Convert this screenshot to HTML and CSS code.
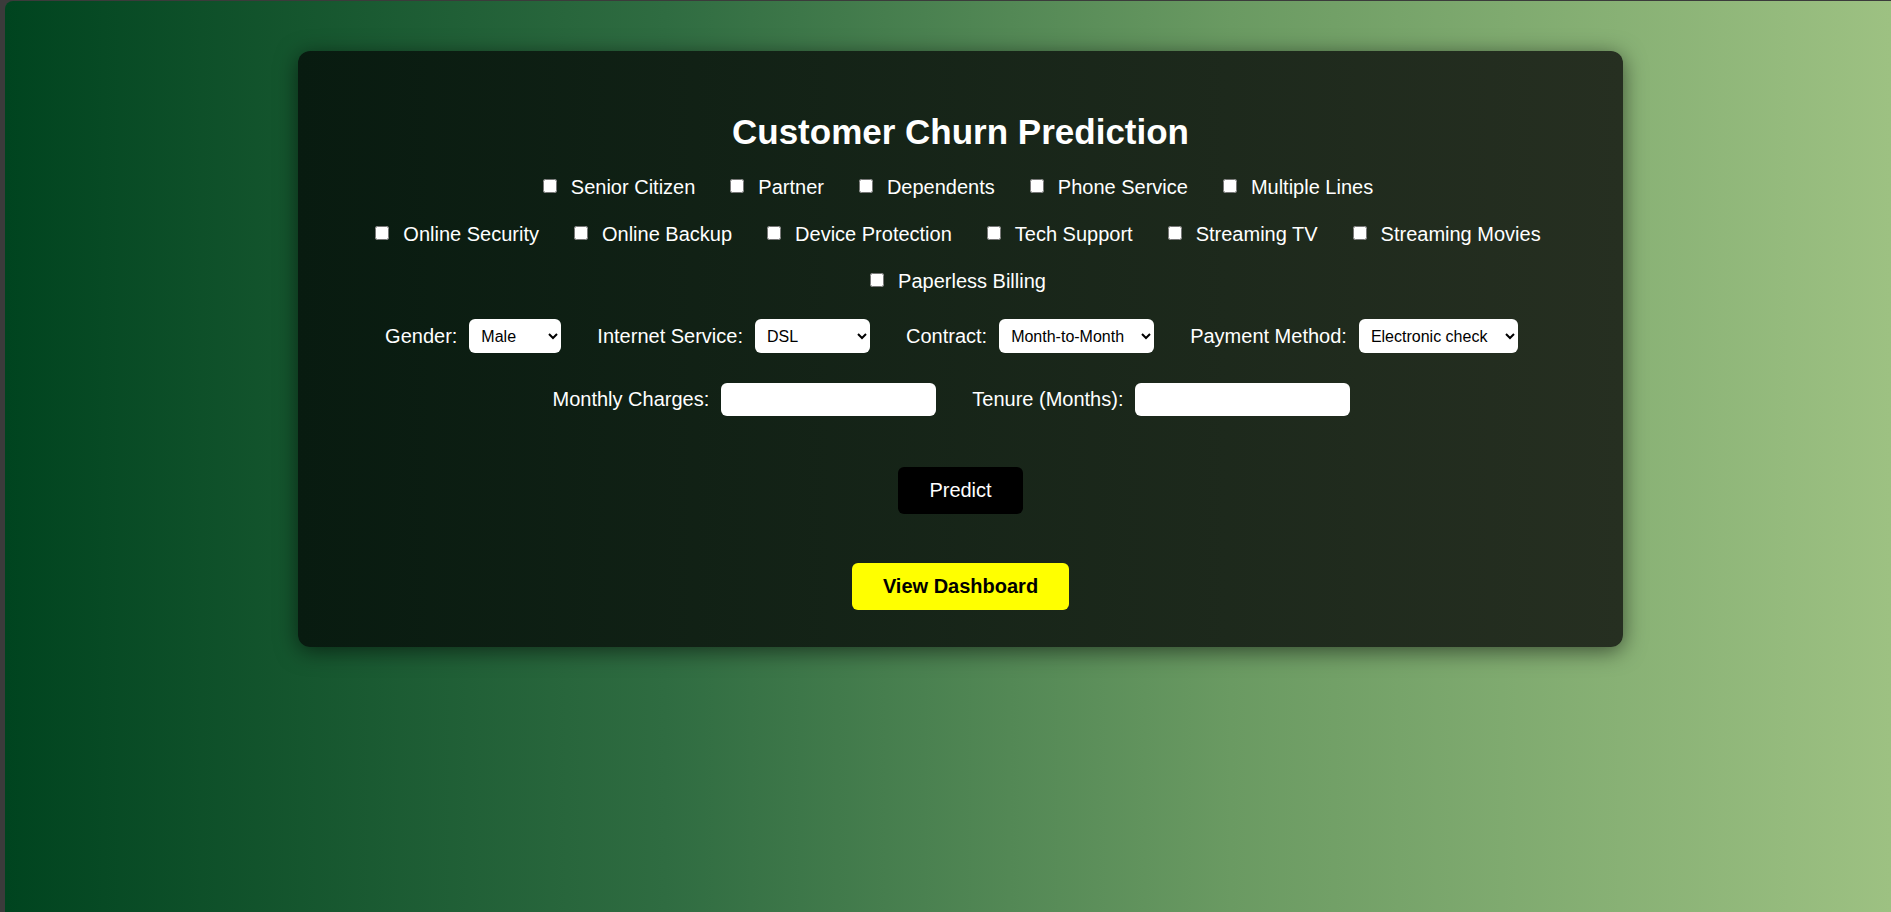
FILE: index.html
```html
<!DOCTYPE html>
<html lang="en">
<head>
<meta charset="utf-8">
<title>Customer Churn Prediction</title>
<link rel="stylesheet" href="styles.css">
</head>
<body>
<div class="page">
  <div class="card">
    <h1 class="title">Customer Churn Prediction</h1>
    <form class="form">
      <div class="checks">
        <label class="check"><input type="checkbox"><span>Senior Citizen</span></label>
        <label class="check"><input type="checkbox"><span>Partner</span></label>
        <label class="check"><input type="checkbox"><span>Dependents</span></label>
        <label class="check"><input type="checkbox"><span>Phone Service</span></label>
        <label class="check"><input type="checkbox"><span>Multiple Lines</span></label>
      </div>
      <div class="checks">
        <label class="check"><input type="checkbox"><span>Online Security</span></label>
        <label class="check"><input type="checkbox"><span>Online Backup</span></label>
        <label class="check"><input type="checkbox"><span>Device Protection</span></label>
        <label class="check"><input type="checkbox"><span>Tech Support</span></label>
        <label class="check"><input type="checkbox"><span>Streaming TV</span></label>
        <label class="check"><input type="checkbox"><span>Streaming Movies</span></label>
      </div>
      <div class="checks checks-last">
        <label class="check"><input type="checkbox"><span>Paperless Billing</span></label>
      </div>
      <div class="fields fields-selects">
        <label class="field">Gender:
          <select class="sel sel-gender"><option>Male</option><option>Female</option></select>
        </label>
        <label class="field">Internet Service:
          <select class="sel sel-internet"><option>DSL</option><option>Fiber optic</option><option>No</option></select>
        </label>
        <label class="field">Contract:
          <select class="sel sel-contract"><option>Month-to-Month</option><option>One year</option><option>Two year</option></select>
        </label>
        <label class="field">Payment Method:
          <select class="sel sel-payment"><option>Electronic check</option><option>Mailed check</option><option>Bank transfer</option><option>Credit card</option></select>
        </label>
      </div>
      <div class="fields fields-inputs">
        <label class="field">Monthly Charges:
          <input class="text-input" type="text">
        </label>
        <label class="field">Tenure (Months):
          <input class="text-input" type="text">
        </label>
      </div>
      <button type="button" class="btn btn-predict">Predict</button>
      <button type="button" class="btn btn-dashboard">View Dashboard</button>
    </form>
  </div>
</div>
</body>
</html>
```
FILE: styles.css
```css
html, body {
  margin: 0;
  padding: 0;
}

body {
  background: #3b3b3b;
  font-family: "Liberation Sans", Arial, sans-serif;
  overflow: hidden;
}

.page {
  margin: 1px 0 0 5px;
  height: 911px;
  border-top-left-radius: 8px;
  background: linear-gradient(to right, #00441f 0%, #2f6c41 35%, #6a9a62 65%, #9dc182 100%);
  display: flow-root;
}

.card {
  margin: 50px 0 0 293px;
  width: 1325px;
  box-sizing: border-box;
  padding: 61px 0 37px;
  border-radius: 12px;
  background: linear-gradient(to right, #081b10, #262f21);
  box-shadow: 0 4px 22px rgba(0, 0, 0, 0.55);
  color: #ffffff;
}

.title {
  margin: 0;
  font-size: 35px;
  font-weight: bold;
  line-height: 40px;
  text-align: center;
  color: #ffffff;
}

.form {
  display: flex;
  flex-direction: column;
  align-items: center;
  margin-top: 24px;
}

.checks {
  display: flex;
  justify-content: center;
  gap: 35px;
  padding-right: 5px;
  font-size: 20px;
  line-height: 23px;
  margin-bottom: 24px;
}

.checks-last {
  margin-bottom: 26px;
}

.check {
  display: flex;
  align-items: center;
  gap: 14px;
}

.check input {
  width: 14px;
  height: 14px;
  margin: 0 0 3px 0;
}

.fields {
  display: flex;
  justify-content: center;
  align-items: center;
  gap: 36px;
  padding-right: 18px;
  font-size: 20px;
  line-height: 23px;
}

.fields-selects {
  margin-bottom: 30px;
}

.fields-inputs {
  margin-bottom: 51px;
}

.field {
  display: flex;
  align-items: center;
  gap: 12px;
}

.sel {
  height: 34px;
  border: none;
  border-radius: 6px;
  background: #ffffff;
  color: #000000;
  font-family: "Liberation Sans", Arial, sans-serif;
  font-size: 16px;
  padding: 0 4px 0 8px;
}

.sel-gender { width: 92px; }
.sel-internet { width: 115px; }
.sel-contract { width: 155px; }
.sel-payment { width: 159px; }

.text-input {
  width: 215px;
  height: 33px;
  box-sizing: border-box;
  border: none;
  border-radius: 6px;
  background: #ffffff;
  font-size: 16px;
  padding: 0 8px;
}

.btn {
  border: none;
  border-radius: 6px;
  font-family: "Liberation Sans", Arial, sans-serif;
  font-size: 20px;
  line-height: 23px;
  padding: 12px 31px;
  cursor: pointer;
}

.btn-predict {
  background: #000000;
  color: #ffffff;
  margin-bottom: 49px;
}

.btn-dashboard {
  background: #ffff00;
  color: #000000;
  font-weight: bold;
}
```
